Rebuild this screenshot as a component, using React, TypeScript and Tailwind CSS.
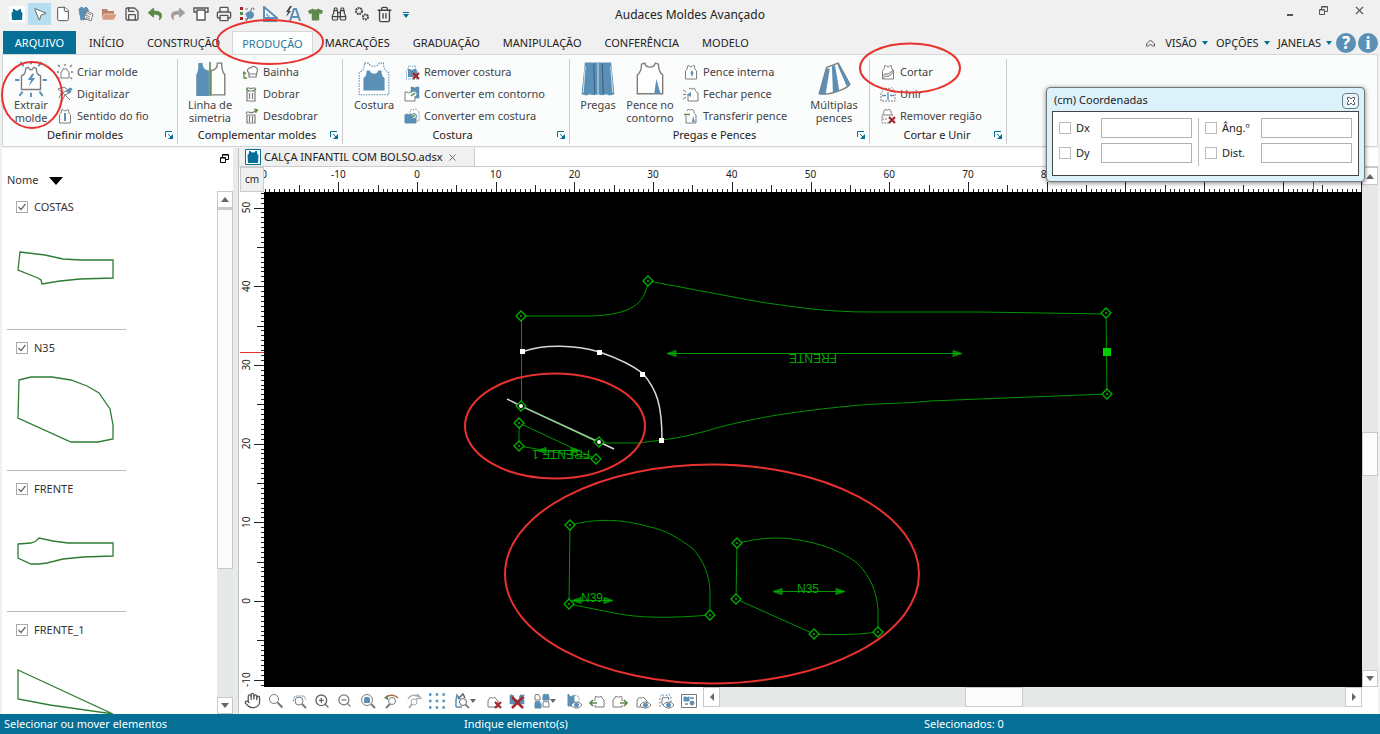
import type { ReactNode } from "react";
import {
  Binoculars,
  File,
  Hand,
  MousePointer2,
  Printer,
  Save,
  Trash2,
  X,
  ZoomIn,
  ZoomOut,
} from "lucide-react";
import { FaReply, FaShare, FaTshirt } from "react-icons/fa";

const BLUE = "#5b8fb5";
const TEAL = "#056f96";
const GRAY = "#7c7c7c";
const RED = "#a3282c";
const OLIVE = "#5d8a4a";

const VEST = "M8 3l3-1c1 5 9 5 10 0l3 1c0 5 1 8 4 10v18H4V13c3-2 4-5 4-10z";
const VEST_S = "M4.5 2L6 1.5c.5 1.8 3.5 1.8 4 0l1.5.5c0 2.4.5 3.8 2 4.8V15h-11V6.8c1.5-1 2-2.4 2-4.8z";

function S({ children, size = 16 }: { children: ReactNode; size?: number }) {
  return (
    <svg width={size} height={size} viewBox="0 0 16 16" fill="none" stroke={GRAY} className="shrink-0" aria-hidden>
      {children}
    </svg>
  );
}

function L({ children }: { children: ReactNode }) {
  return (
    <svg width={34} height={37} viewBox="0 0 32 35" fill="none" stroke={GRAY} className="shrink-0" aria-hidden>
      {children}
    </svg>
  );
}

function Caret({ className = "text-[#056f96]" }: { className?: string }) {
  return (
    <svg width="6" height="4" viewBox="0 0 6 4" className={`shrink-0 ${className}`} aria-hidden>
      <path d="M0 0h6L3 4z" fill="currentColor" />
    </svg>
  );
}

const redX = <path d="M9 9l6 6M15 9l-6 6" stroke={RED} strokeWidth="2.2" />;

const smallIcons = {
  criar: (
    <S>
      <path d="M6 5l1-.5c.5 1 1.5 1 2 0l1 .5c0 1.5.5 2.5 2 3v6H4V8c1.5-.5 2-1.5 2-3z" fill="#fff" />
      <path d="M1 1l2 2M15 1l-2 2M8 0v2M0 8h2M14 8h2M1 15l1.5-1.5M15 15l-1.5-1.5" strokeWidth="1.3" />
    </S>
  ),
  digitalizar: (
    <S>
      <path d="M1 3l6-2 7 5-6 3zM8 9l-3 6M8 9l5 5M3 8l8-4M2 12l4-8" />
      <path d="M9 5l4-3 2 1-3 4z" fill={BLUE} stroke={BLUE} />
    </S>
  ),
  fio: (
    <S>
      <path d={VEST_S} fill="#fff" />
      <path d="M8 5v8" stroke={BLUE} strokeWidth="2" />
    </S>
  ),
  bainha: (
    <S>
      <path d="M6 13V9C3 7 5 3 8 4c2-3 8-1 6 4l-1 5z" fill="#fff" strokeWidth="1.2" />
      <path d="M6 10h7" />
      <path d="M4 14H1V8M0 10l1-2 2 2" stroke={OLIVE} strokeWidth="1.3" />
    </S>
  ),
  dobrar: (
    <S>
      <path d="M4 4V2h2.5c.5 1 2.5 1 3 0H12v2M4 5h8v10H4zM6.5 7v6M9.5 7v6" fill="#fff" strokeWidth="1.2" />
      <path d="M3 3l3 2M13 3l-3 2" stroke={OLIVE} strokeWidth="1.3" />
    </S>
  ),
  desdobrar: (
    <S>
      <path d="M3 6l1-2h2c.5 1 2 1 3 0M4 7h8v8H4zM6.5 8v6M9.5 8v6" fill="#fff" strokeWidth="1.2" />
      <path d="M9 5l5-3M11 1l3.5 1-2 3" stroke={OLIVE} strokeWidth="1.3" />
    </S>
  ),
  removerCostura: (
    <S>
      <path d={VEST_S} fill="#fff" stroke={BLUE} strokeDasharray="1 1" />
      <path d="M4 5h2l2 1 2-1h2l1 3v5H4z" fill={BLUE} stroke="none" />
      {redX}
    </S>
  ),
  contorno: (
    <S>
      <path d="M7 1h2l1.5 1L12 1h3v11H7z" fill={BLUE} stroke={BLUE} strokeDasharray="1 1" />
      <path d="M1 6h2l1.5 1L6 6h2c0 2 1 3 3 3v6H1z" fill="#fff" />
      <circle cx="10" cy="8" r="2.5" fill="#eef5ee" stroke="none" />
      <path d="M7 10l4-3" stroke={OLIVE} strokeWidth="1.5" />
    </S>
  ),
  emCostura: (
    <S>
      <path d="M6 3l2-2 2 1 2-1 3 3v9H6z" fill="#fff" strokeDasharray="1 1" />
      <path d="M1 7l2-1 2 1 2-1 2 2 3 1v6H1z" fill={BLUE} stroke={BLUE} />
      <circle cx="10" cy="8" r="2.5" fill="#e6efe6" stroke={BLUE} />
      <path d="M8 9l3-2" stroke={OLIVE} strokeWidth="1.5" />
    </S>
  ),
  interna: (
    <S>
      <path d={VEST_S} fill="#fff" />
      <path d="M9 6l1.5 3L9 13 7.5 9z" fill={BLUE} stroke="none" />
    </S>
  ),
  fechar: (
    <S>
      <path d="M6 3l1.5-1c.5 1.5 2.5 1.5 3 0L12 3c0 2 1 3 3 4v8H5V8" fill="#fff" />
      <path d="M0 4l3 2M0 13l3-2M0 8.5h3" />
      <path d="M4 8.5l4-2.5v5z" fill={BLUE} stroke="none" />
    </S>
  ),
  transferir: (
    <S>
      <path d="M4 3l1.5-2c.5 1.5 3 1.5 3.5 0L11 3c0 2 .5 3 2 4v8H3V8" fill="#fff" />
      <path d="M1 6.5h6" stroke={OLIVE} strokeWidth="1.5" />
      <path d="M10 8l2 6H9z" fill={BLUE} stroke="none" />
    </S>
  ),
  cortar: (
    <S>
      <path d={VEST_S} fill="#fff" />
      <path d="M2.5 12c3-4 5-1 7-3l4-3v2l-4 4c-2 1-4-1-7 3z" fill="#ddd" />
    </S>
  ),
  unir: (
    <S>
      <path d="M3 3l1.5-1.5C5 3 7 3 8 2c1 1 3 1 3.5-.5L13 3c0 2 .5 3 2 4v8H1V7c1.5-1 2-2 2-4z" fill="#fff" strokeDasharray="2 1" />
      <path d="M2 9.5h4M14 9.5h-4M8 6v8" stroke={BLUE} strokeWidth="1.4" />
    </S>
  ),
  removerRegiao: (
    <S>
      <path d="M4 3l1.5-2c.5 1.5 3 1.5 3.5 0L11 3c0 2 .5 3 2 4H2c1.5-1 2-2 2-4z" fill="#fff" />
      <path d="M2 8v7h7M2 11h6" strokeDasharray="2 1" />
      {redX}
    </S>
  ),
};

const largeIcons = {
  extrair: (
    <L>
      <path d="M11 7l2.5-1c1 3 4 3 5 0L21 7c0 4 1 6 4 7v13H7V14c3-1 4-3 4-7z" fill="#fff" strokeWidth="1.3" />
      <path d="M17 12l-4 6h3l-2 6 6-8h-3l2-4z" fill={BLUE} stroke="none" />
      <path d="M16 0v3M6 1l3 4M26 1l-3 4M1 18h4M27 18h4M5 33l3-4M27 33l-3-4M16 30v4" stroke={BLUE} strokeWidth="1.8" />
    </L>
  ),
  simetria: (
    <L>
      <path d="M5 2h4c0 4 2 7 6 7v24H3V13c2-3 2-7 2-11z" fill={BLUE} stroke="none" />
      <path d="M27 2h-4c0 4-2 7-6 7v23h13V13c-3-3-3-7-3-11z" fill="#fff" strokeWidth="1.3" />
      <path d="M16 1v32" stroke={OLIVE} strokeWidth="1.5" />
    </L>
  ),
  costura: (
    <L>
      <path d="M7 2h4c1 4 9 4 10 0h4c0 4 1 7 5 9v21H2V11c4-2 5-5 5-9z" fill="#fff" stroke={BLUE} strokeDasharray="1.5 1" />
      <path d="M9 9h3c1 4 7 4 8 0h3c0 4 1 6 3 7v12H6V16c2-1 3-3 3-7z" fill={BLUE} stroke="none" />
    </L>
  ),
  pregas: (
    <L>
      <path d="M4 2h24l3 29-4 1-3-1-4 1-4-1-4 1-4-1-3 1-4-1z" fill={BLUE} stroke={BLUE} />
      <path d="M4 5L2 30M16 2v29M28 5l2 25" stroke="#c9deeb" />
      <path d="M12 3l1 28M20 3l1 28" stroke="#355f7d" />
    </L>
  ),
  pence: (
    <L>
      <path d={VEST} fill="#fff" strokeWidth="1.3" />
      <path d="M22 17l4 14h-6z" fill={BLUE} stroke="none" />
    </L>
  ),
  multiplas: (
    <L>
      <path d="M9 6l11-4 11 20c-3 4-7 5-10 6-7 3-13 4-19 3z" fill="#fff" strokeWidth="1.3" />
      <path d="M9 7L2 31l6 1 4-25zM14 5l1 25 6-2L17 4zM19 3l9 21 3-2L21 4z" fill={BLUE} stroke="none" />
    </L>
  ),
};

type SmallItem = { label: string; icon: keyof typeof smallIcons };

function SmallColumn({ items }: { items: SmallItem[] }) {
  return (
    <div className="flex flex-col">
      {items.map((item) => (
        <button key={item.label} className="flex h-[22px] items-center gap-1 whitespace-nowrap text-left">
          {smallIcons[item.icon]}
          {item.label}
        </button>
      ))}
    </div>
  );
}

function LargeButton({ label, icon }: { label: string; icon: keyof typeof largeIcons }) {
  return (
    <button className="flex w-[52px] shrink-0 flex-col items-center leading-[13px]">
      {largeIcons[icon]}
      <span className="whitespace-pre-line text-center">{label}</span>
    </button>
  );
}

function Group({ title, className, children }: { title: string; className: string; children: ReactNode }) {
  return (
    <section className={`flex shrink-0 flex-col border-r border-[#c9cccd] ${className}`}>
      <div className="flex h-[66px] items-start">{children}</div>
      <div className="flex h-4 items-center pr-1">
        <h2 className="flex-1 text-center text-[#222]">{title}</h2>
        <button aria-label={`Opções de ${title}`}>
          <svg width="8" height="8" viewBox="0 0 8 8" fill="none" stroke={TEAL} aria-hidden>
            <path d="M.5 6V.5H7M3 3l3 3" />
            <path d="M8 3v5H3z" fill={TEAL} stroke="none" />
          </svg>
        </button>
      </div>
    </section>
  );
}

const quickAccess: { label: string; icon: ReactNode; active?: boolean }[] = [
  {
    label: "Audaces",
    icon: (
      <S>
        <rect width="16" height="16" fill="#fff" stroke="none" />
        <path d="M4 3h1.5c1 2 4 2 5 0H12c0 2 0 3 1.5 4L13 14H3L2.5 7C4 6 4 5 4 3z" fill={TEAL} stroke="none" />
      </S>
    ),
  },
  { label: "Selecionar", icon: <MousePointer2 size={16} strokeWidth={1.5} fill="#fff" color="#666" />, active: true },
  { label: "Novo", icon: <File size={16} strokeWidth={1.5} fill="#fff" color="#555" /> },
  {
    label: "Novo molde",
    icon: (
      <S>
        <path d="M1 3l3-2c1 2 2 2 4 0l2 2 1 10-8 1z" fill={BLUE} stroke={BLUE} />
        <path d="M9 5l6 3-2 7-7-3z" fill="#fff" />
        <path d="M9 7l4 2M8 9l4 2M8 11l4 2" />
      </S>
    ),
  },
  {
    label: "Abrir",
    icon: (
      <S>
        <path d="M1 3h5l1 2h6v8H1z" fill="#b9806a" stroke="none" />
        <path d="M3 8h13l-3 6H1z" fill="#d79a7c" stroke="#fff" strokeWidth=".5" />
      </S>
    ),
  },
  { label: "Salvar", icon: <Save size={16} strokeWidth={2} color="#555" /> },
  { label: "Desfazer", icon: <FaReply size={14} color={OLIVE} /> },
  { label: "Refazer", icon: <FaShare size={14} color="#a0a0a0" /> },
  {
    label: "Plotar",
    icon: (
      <S>
        <path d="M1 2h14v4H1z" fill="#fff" stroke="#555" strokeWidth="1.4" />
        <path d="M4 4h8v10H4z" fill="#fff" stroke="#555" strokeWidth="1.4" />
      </S>
    ),
  },
  { label: "Imprimir", icon: <Printer size={16} strokeWidth={2} color="#555" /> },
  {
    label: "Propriedades",
    icon: (
      <S>
        <path d="M1 1h3v3H1zM1 11h3v3H1z" fill={RED} stroke="none" />
        <path d="M1 6h3v3H1z" fill={OLIVE} stroke="none" />
        <path d="M6 3h3M6 8h3M6 13h3" />
        <circle cx="11" cy="9" r="3.5" fill={BLUE} stroke={BLUE} />
        <path d="M12 5c0-4 3-4 3-1M9 12l-2 3" stroke="#555" />
      </S>
    ),
  },
  {
    label: "Medidas",
    icon: (
      <S>
        <path d="M2 1l13 11H2z" fill="#fff" stroke={BLUE} strokeWidth="2" />
        <path d="M5 7v3h3" stroke={BLUE} />
        <path d="M1 15h14" stroke={BLUE} strokeWidth="2" />
      </S>
    ),
  },
  {
    label: "Texto automático",
    icon: (
      <S>
        <path d="M5 15l4-12h2l4 12M6.5 11h7" stroke={BLUE} strokeWidth="2" />
        <path d="M5 0L1 6h2l-2 5 5-6H4l3-5z" fill="#444" stroke="none" />
      </S>
    ),
  },
  { label: "Peça", icon: <FaTshirt size={15} color={OLIVE} /> },
  { label: "Localizar", icon: <Binoculars size={16} strokeWidth={1.8} color="#444" /> },
  {
    label: "Configurações",
    icon: (
      <S>
        <circle cx="5" cy="5" r="3" stroke="#444" strokeWidth="2" strokeDasharray="1.8 .7" />
        <circle cx="11.5" cy="11" r="2.5" stroke="#444" strokeWidth="2" strokeDasharray="1.8 .7" />
      </S>
    ),
  },
  { label: "Excluir", icon: <Trash2 size={17} strokeWidth={1.9} color="#444" /> },
];

const tabs = ["INÍCIO", "CONSTRUÇÃO", "PRODUÇÃO", "MARCAÇÕES", "GRADUAÇÃO", "MANIPULAÇÃO", "CONFERÊNCIA", "MODELO"];

function TitleBar() {
  return (
    <header className="flex h-[30px] items-center">
      <div className="flex w-[396px] items-center pb-[2px] pl-[5px]">
        {quickAccess.map((q) => (
          <button
            key={q.label}
            aria-label={q.label}
            className={`flex h-[22px] flex-1 items-center justify-center ${q.active ? "bg-[#b5dff0]" : ""}`}
          >
            {q.icon}
          </button>
        ))}
      </div>
      <button aria-label="Personalizar" className="flex w-5 flex-col items-center gap-px text-[#056f96]">
        <span className="h-px w-[6px] bg-[#056f96]" />
        <Caret />
      </button>
      <h1 className="flex-1 pr-[320px] text-center text-[12px] text-[#222]">Audaces Moldes Avançado</h1>
      <div className="flex h-full w-[96px] items-start justify-between pr-[14px] pt-1 text-[#555]">
        <button aria-label="Minimizar" className="flex h-3 w-3 items-end justify-center">
          <span className="h-[2px] w-[6px] bg-[#555]" />
        </button>
        <button aria-label="Restaurar" className="flex h-3 w-3 items-center">
          <RestoreIcon />
        </button>
        <button aria-label="Fechar">
          <X size={13} strokeWidth={2} />
        </button>
      </div>
    </header>
  );
}

function RestoreIcon() {
  return (
    <svg width="9" height="9" viewBox="0 0 9 9" fill="none" stroke="currentColor" aria-hidden>
      <path d="M2.5 3V.5h6v5H6M3 1h5" />
      <path d="M.5 3.5h5v5h-5zM1 4h4" />
    </svg>
  );
}

function TabBar() {
  return (
    <nav className="flex h-6 items-end text-[11px] text-[#222]">
      <button className="ml-[3px] h-[23px] w-[73px] bg-[#056f96] pt-[2px] text-white">ARQUIVO</button>
      <div className="ml-[2px] flex gap-px">
        {tabs.map((tab) => (
          <button
            key={tab}
            className={
              tab === "PRODUÇÃO"
                ? "h-[23px] border border-b-0 border-[#d5d8d9] bg-[#fcfdfd] px-[9px] pt-[2px] text-[#2f7596]"
                : "h-[23px] px-[11px] pt-[2px]"
            }
          >
            {tab}
          </button>
        ))}
      </div>
      <div className="ml-auto flex h-[23px] items-center pr-[2px]">
        <button aria-label="Recolher faixa" className="mr-[10px]">
          <svg width="9" height="8" viewBox="0 0 9 8" fill="none" stroke="#555" aria-hidden>
            <path d="M.5 5l4-4 4 4v2h-2l-2-2-2 2h-2z" />
          </svg>
        </button>
        <div className="mr-1 flex gap-2">
          {["VISÃO", "OPÇÕES", "JANELAS"].map((menu) => (
            <button key={menu} className="flex items-center gap-[5px] pt-px">
              {menu}
              <Caret />
            </button>
          ))}
        </div>
        <div className="flex gap-[2px]">
          <button
            aria-label="Ajuda"
            className="h-[20px] w-[20px] rounded-full bg-[#5b8fb5] text-[17px] font-bold leading-[20px] text-white"
          >
            ?
          </button>
          <button
            aria-label="Informações"
            className="h-[20px] w-[20px] rounded-full bg-[#5b8fb5] font-['Liberation_Serif',serif] text-[18px] font-bold leading-[20px] text-white"
          >
            i
          </button>
        </div>
      </div>
    </nav>
  );
}

function Ribbon() {
  return (
    <div className="mx-[2px] flex h-[93px] shrink-0 overflow-hidden border border-[#d3d7d8] bg-[#fbfcfc] pb-[2px] pt-1 text-[11px] text-[#444]">
      <Group title="Definir moldes" className="w-[175px] pl-[2px] pt-[2px]">
        <LargeButton label={"Extrair\nmolde"} icon="extrair" />
        <SmallColumn
          items={[
            { label: "Criar molde", icon: "criar" },
            { label: "Digitalizar", icon: "digitalizar" },
            { label: "Sentido do fio", icon: "fio" },
          ]}
        />
      </Group>
      <Group title="Complementar moldes" className="w-[165px] pl-[6px] pt-[2px]">
        <LargeButton label={"Linha de\nsimetria"} icon="simetria" />
        <div className="ml-[7px]">
          <SmallColumn
            items={[
              { label: "Bainha", icon: "bainha" },
              { label: "Dobrar", icon: "dobrar" },
              { label: "Desdobrar", icon: "desdobrar" },
            ]}
          />
        </div>
      </Group>
      <Group title="Costura" className="w-[227px] pl-[5px] pt-[2px]">
        <LargeButton label="Costura" icon="costura" />
        <div className="ml-1">
          <SmallColumn
            items={[
              { label: "Remover costura", icon: "removerCostura" },
              { label: "Converter em contorno", icon: "contorno" },
              { label: "Converter em costura", icon: "emCostura" },
            ]}
          />
        </div>
      </Group>
      <Group title="Pregas e Pences" className="w-[300px] pl-[2px] pt-[2px]">
        <LargeButton label="Pregas" icon="pregas" />
        <LargeButton label={"Pence no\ncontorno"} icon="pence" />
        <div className="ml-[7px] w-[125px]">
          <SmallColumn
            items={[
              { label: "Pence interna", icon: "interna" },
              { label: "Fechar pence", icon: "fechar" },
              { label: "Transferir pence", icon: "transferir" },
            ]}
          />
        </div>
        <LargeButton label={"Múltiplas\npences"} icon="multiplas" />
      </Group>
      <Group title="Cortar e Unir" className="w-[137px] pl-[10px] pt-[2px]">
        <SmallColumn
          items={[
            { label: "Cortar", icon: "cortar" },
            { label: "Unir", icon: "unir" },
            { label: "Remover região", icon: "removerRegiao" },
          ]}
        />
      </Group>
    </div>
  );
}

const pieces = [
  { name: "COSTAS", points: "13,27 38,30 56,34 74,35 106,35 106,53 73,54 53,56 35,59 34,55 31,53 11,45" },
  { name: "N35", points: "12,14 24,11 45,11 64,14 80,20 92,27 103,43 106,59 106,73 91,76 64,76 11,52" },
  {
    name: "FRENTE",
    points: "11,37 24,36 29,34 32,31 46,34 61,36 106,36 106,49 76,50 56,52 40,56 32,57 24,57 11,51",
  },
  { name: "FRENTE_1", points: "11,22 106,66 43,57 11,51" },
];

function ArrowButton({ dir, className }: { dir: "up" | "down" | "left" | "right"; className: string }) {
  const d = { up: "M0 7h8L4 2z", down: "M0 2h8L4 7z", left: "M6 0v8L2 4z", right: "M2 0v8l4-4z" }[dir];
  return (
    <button
      aria-label={`Rolar ${dir}`}
      className={`flex shrink-0 items-center justify-center border border-[#c8caca] bg-white ${className}`}
    >
      <svg width="8" height="9" viewBox="0 0 8 9" aria-hidden>
        <path d={d} fill="#666" />
      </svg>
    </button>
  );
}

function PiecePanel() {
  return (
    <aside className="ml-[2px] flex w-[231px] shrink-0 flex-col bg-white">
      <div className="flex h-6 items-center justify-end pb-1 pr-1 text-black">
        <button aria-label="Desencaixar painel">
          <RestoreIcon />
        </button>
      </div>
      <div className="flex h-[17px] items-center gap-[10px] pl-[5px] text-[11px] text-[#333]">
        Nome
        <svg width="14" height="8" viewBox="0 0 14 8" aria-hidden>
          <path d="M0 0h14L7 8z" />
        </svg>
      </div>
      <div className="flex min-h-0 flex-1">
        <ul className="min-w-0 flex-1 overflow-hidden">
          {pieces.map((p) => (
            <li key={p.name} className="ml-[5px] h-[141px] w-[119px] border-b border-[#b4bcc0]">
              <label className="flex h-9 items-center gap-[6px] pl-[9px] text-[11px] text-[#333]">
                <input
                  type="checkbox"
                  defaultChecked
                  className="peer m-0 h-3 w-3 shrink-0 appearance-none border border-[#aaa] bg-white"
                />
                <svg
                  width="8"
                  height="8"
                  viewBox="0 0 8 8"
                  fill="none"
                  stroke="#666"
                  className="-ml-4 mr-[2px] hidden peer-checked:block"
                  aria-hidden
                >
                  <path d="M.5 4L3 6.5 7.5 1" strokeWidth="1.2" />
                </svg>
                {p.name}
              </label>
              <svg width="119" height="104" fill="none" stroke="#2e7d32" strokeWidth="1.3" aria-label={p.name}>
                <polygon points={p.points} />
              </svg>
            </li>
          ))}
        </ul>
        <div className="mt-[2px] flex w-4 flex-col bg-[#e6e8e8]">
          <ArrowButton dir="up" className="h-[17px] w-4" />
          <div className="h-[69%] border border-t-2 border-[#c8caca] bg-[#fbfbfb]" />
          <div className="flex-1" />
          <ArrowButton dir="down" className="h-[17px] w-4" />
        </div>
      </div>
    </aside>
  );
}

// 10 cm on screen
const STEP = 78.7;
const SUB = 16;

function tickLength(i: number) {
  if (i % SUB === 0) return 10;
  return i % (SUB / 2) === 0 ? 7 : 3;
}

function TopRuler() {
  const origin = 153;
  const ticks = Array.from({ length: 16 * SUB }, (_, i) => i - 2 * SUB);
  return (
    <svg className="h-[25px] min-w-0 flex-1 bg-white text-[10px]" aria-label="Régua horizontal">
      {ticks.map((i) => (
        <path key={i} d={`M${Math.round(origin + (i * STEP) / SUB) + 0.5} 25v${-tickLength(i)}`} stroke="#222" />
      ))}
      {Array.from({ length: 14 }, (_, n) => n - 2).map((n) => (
        <text key={n} x={origin + n * STEP} y="11" textAnchor="middle" fill="#222">
          {n * 10}
        </text>
      ))}
      <path d="M1049.5 13v12" stroke="#e8322f" />
    </svg>
  );
}

function SideRuler() {
  const origin = 409;
  const ticks = Array.from({ length: 14 * SUB }, (_, i) => i - 6 * SUB);
  return (
    <svg className="h-full w-6 shrink-0 bg-white text-[10px]" aria-label="Régua vertical">
      {ticks.map((i) => (
        <path key={i} d={`M24 ${Math.round(origin + (i * STEP) / SUB) + 0.5}h${-tickLength(i)}`} stroke="#222" />
      ))}
      {Array.from({ length: 7 }, (_, n) => n - 5).map((n) => (
        <text key={n} transform={`translate(10 ${origin + n * STEP}) rotate(-90)`} textAnchor="middle" fill="#222">
          {n * -10}
        </text>
      ))}
      <path d="M0 160.5h24" stroke="#e8322f" />
    </svg>
  );
}

const nodes: { x: number; y: number; picked?: boolean }[] = [
  { x: 257, y: 124 },
  { x: 384, y: 89 },
  { x: 842, y: 121 },
  { x: 843, y: 202 },
  { x: 257, y: 214, picked: true },
  { x: 335, y: 250, picked: true },
  { x: 255, y: 231 },
  { x: 255, y: 254 },
  { x: 332, y: 267 },
  { x: 306, y: 333 },
  { x: 305, y: 412 },
  { x: 446, y: 423 },
  { x: 473, y: 351 },
  { x: 472, y: 407 },
  { x: 550, y: 442 },
  { x: 614, y: 440 },
];

const curvePoints = [
  [259, 159],
  [336, 160],
  [379, 182],
  [398, 248],
];

function GrainArrow({ x1, x2, y }: { x1: number; x2: number; y: number }) {
  return (
    <g fill="#00b400">
      <path d={`M${x1} ${y}H${x2}`} stroke="#009a00" />
      <path d={`M${x1} ${y}l9-3v6zM${x2} ${y}l-9-3v6z`} fillOpacity=".7" />
    </g>
  );
}

function Canvas() {
  return (
    <svg
      className="h-full min-w-0 flex-1 bg-black font-['Liberation_Sans',sans-serif]"
      fill="none"
      stroke="#009400"
      aria-label="Área de desenho"
    >
      <path d="M257.5 124H329C366 122 381 113 384 89L496 110C536 116 566 120 606 120H716L842 122L843 202L666 209C636 212 616 211 586 214C526 220 496 225 456 235C436 241 421 245 398 248L374 251H335L257.5 214z" />
      <path d="M255 231v23l77 13z" />
      <path d="M306 333C333 326 358 327 386 335C401 338 413 345 428 356C440 368 446 386 446 400V423C410 426 375 427 345 420L305 412z" />
      <path d="M473 351C485 349 497 346 511 346C530 346 548 350 563 355C576 360 586 365 594 372C606 384 613 400 614 418V440C590 443 575 443 550 442L472 407z" />
      <GrainArrow x1={403} x2={698} y={161.5} />
      <GrainArrow x1={273} x2={316} y={258.5} />
      <GrainArrow x1={308} x2={349} y={408.5} />
      <GrainArrow x1={509} x2={581} y={399.5} />
      <g fill="#00a800" stroke="none" fontSize="12">
        <text transform="translate(573 162) rotate(180)">FRENTE</text>
        <text transform="translate(326 258) rotate(180)">FRENTE 1</text>
        <text x="317" y="410">
          N39
        </text>
        <text x="533" y="401">
          N35
        </text>
      </g>
      <g stroke="#d8d8d8" strokeWidth="1.5">
        <path d="M259 159.5C281 152 311 153 335.5 160C353 166 368 173 379 181.5C393 198 398 213 398 248" />
        <path d="M243 207l14 7M335 250l15 7" />
        <path d="M257 214l78 36" stroke="#9ccc9c" />
      </g>
      <g fill="#fff" stroke="none">
        {curvePoints.map(([x, y]) => (
          <rect key={x} x={x - 3} y={y - 2} width="5" height="5" />
        ))}
      </g>
      {nodes.map(({ x, y, picked }) => (
        <g key={`${x}-${y}`}>
          <path d={`M${x} ${y - 5}l5 5l-5 5l-5-5z`} fill="#000" stroke="#00b400" strokeWidth="1.3" />
          <circle cx={x} cy={y} r={picked ? 2 : 1} fill={picked ? "#fff" : "#00b400"} stroke="none" />
        </g>
      ))}
      <path d="M839 156h8v8h-8z" fill="#0c0" stroke="none" />
    </svg>
  );
}

const miniVest = "M3 6l1.5-2c.5 1.5 3.5 1.5 4 0L10 6l2 2v6H2V8z";
const eye = (
  <>
    <path d="M5 12c3-4 8-4 11 0-3 4-8 4-11 0z" fill="#fff" stroke="#777" />
    <circle cx="10.5" cy="12" r="2" fill={BLUE} stroke={BLUE} />
  </>
);

const viewTools: { label: string; icon: ReactNode; menu?: boolean }[] = [
  { label: "Mover vista", icon: <Hand size={17} strokeWidth={1.8} color="#555" /> },
  {
    label: "Zoom",
    icon: (
      <S>
        <circle cx="6" cy="6" r="4.5" fill="#fff" />
        <path d="M9.5 9.5l5 5" strokeWidth="2.2" />
      </S>
    ),
  },
  {
    label: "Zoom janela",
    icon: (
      <S>
        <path d="M2 8l2-5h9l2 4" strokeDasharray="2 1" stroke={BLUE} />
        <circle cx="8" cy="8" r="4" fill="#fff" />
        <path d="M11 11l4 4" strokeWidth="2" />
      </S>
    ),
  },
  { label: "Ampliar", icon: <ZoomIn size={16} strokeWidth={2} color="#666" /> },
  { label: "Reduzir", icon: <ZoomOut size={15} strokeWidth={2} color="#777" /> },
  {
    label: "Zoom molde",
    icon: (
      <S>
        <circle cx="7" cy="7" r="5.5" fill="#fff" />
        <path d="M4 6l1-2h4l1 2v4H4z" fill={BLUE} stroke="none" />
        <path d="M11 11l4 4" strokeWidth="2.2" />
      </S>
    ),
  },
  {
    label: "Zoom anterior",
    icon: (
      <S>
        <path d="M3 4c4-3 9-2 12 1" stroke="#a8704a" strokeWidth="1.5" />
        <path d="M1 5l4-3v5z" fill={OLIVE} stroke="none" />
        <circle cx="9" cy="8" r="3.5" />
        <path d="M7 11l-4 4" strokeWidth="2" />
      </S>
    ),
  },
  {
    label: "Zoom seguinte",
    icon: (
      <S>
        <path d="M2 6c2-4 7-5 11-2M11 1l4 4-5 1" stroke="#aaa" strokeWidth="1.5" />
        <circle cx="8" cy="9" r="3" stroke="#aaa" />
        <path d="M6 11l-3 4" stroke="#aaa" strokeWidth="2" />
      </S>
    ),
  },
  {
    label: "Grade",
    icon: (
      <S>
        <path d="M0 1.5h16M0 8h16M0 14.5h16" stroke={BLUE} strokeWidth="2.5" strokeDasharray="2.5 4.2" />
      </S>
    ),
  },
  {
    label: "Visualizar molde",
    menu: true,
    icon: (
      <S>
        <path d="M2 14V7l1-5 3 4M2 14h6" stroke={BLUE} strokeWidth="1.5" />
        <circle cx="9" cy="9" r="3.5" fill="#fff" stroke="#666" />
        <path d="M11.5 11.5L15 15M4 6l5-5 2 4" stroke="#666" strokeWidth="1.5" />
      </S>
    ),
  },
  {
    label: "Ocultar molde",
    icon: (
      <S>
        <path d={miniVest} fill="#fff" />
        {redX}
      </S>
    ),
  },
  {
    label: "Ocultar todos",
    icon: (
      <S>
        <path d="M1 2h3l1 5h5l1-5h4v9H1z" fill={BLUE} stroke={BLUE} strokeDasharray="2 1" />
        <path d="M3 4l11 11M14 4L3 15" stroke={RED} strokeWidth="2.5" />
      </S>
    ),
  },
  {
    label: "Organizar",
    menu: true,
    icon: (
      <S>
        <path d="M1 3l1-2 1 1 1-1 2 3v3H1zM9 10l1-2 2 1 2-1 1 3v3H9z" fill="#fff" />
        <path d="M9 3l1-2 2 1 2-1 1 3v3H9zM1 10l1-2 1 1 2-1 2 3v4H1z" fill={BLUE} stroke={BLUE} />
      </S>
    ),
  },
  {
    label: "Exibir preenchido",
    icon: (
      <S>
        <path d="M2 1l3 3 3-2v11H2z" fill={BLUE} stroke={BLUE} />
        <path d="M9 2l4 2v5" strokeDasharray="1 1" />
        {eye}
      </S>
    ),
  },
  {
    label: "Molde anterior",
    icon: (
      <S>
        <path d="M6 8V5l1-2c.5 1.5 4 1.5 5 0l1 2 2 2v7H6v-2" />
        <path d="M8 10H2M4 7l-3 3 3 3" stroke={OLIVE} strokeWidth="1.7" />
      </S>
    ),
  },
  {
    label: "Próximo molde",
    icon: (
      <S>
        <path d="M10 8V5L9 3c-.5 1.5-4 1.5-5 0L3 5 1 7v7h9v-2" />
        <path d="M8 10h6M12 7l3 3-3 3" stroke={OLIVE} strokeWidth="1.7" />
      </S>
    ),
  },
  {
    label: "Exibir molde",
    icon: (
      <S>
        <path d={miniVest} fill="#fff" />
        {eye}
      </S>
    ),
  },
  {
    label: "Exibir costura",
    icon: (
      <S>
        <path d="M2 14V5l2-4c1 2 5 2 7 0l2 4v4" stroke={BLUE} strokeDasharray="2 1.5" />
        <path d="M4 12V7l1-3c1 1 4 1 5 0l1 3" />
        {eye}
      </S>
    ),
  },
  {
    label: "Miniaturas",
    icon: (
      <S>
        <path d="M.5 1.5h15v13H.5z" fill="#fff" stroke="#777" />
        <path d="M3 4h2l1 1 1-1h1v4H3z" fill={BLUE} stroke={BLUE} />
        <circle cx="11" cy="10" r="2" fill={BLUE} stroke={BLUE} />
        <path d="M9 5h3v1M4 11h3" stroke={BLUE} strokeWidth="1.5" />
      </S>
    ),
  },
];

function Workspace() {
  return (
    <main className="mr-[2px] flex min-w-0 flex-1 flex-col border-l border-[#bfc3c4] bg-white">
      <div className="flex h-[19px] shrink-0 items-end border-b border-[#c9cccd]">
        <div className="flex h-[18px] w-[236px] items-center gap-[3px] border-r border-[#c9cccd] bg-[#f0f0f0] pl-[6px] text-[11px] text-[#222]">
          <svg width="16" height="16" viewBox="0 0 16 16" className="shrink-0" aria-hidden>
            <path d="M.5.5h15v15H.5z" fill="#fff" stroke={TEAL} />
            <path d="M4 2h1.5c1 2 4 2 5 0H12c0 2 0 3 1.5 4L13 14H3L2.5 6C4 5 4 4 4 2z" fill={TEAL} />
          </svg>
          <span className="whitespace-nowrap">CALÇA INFANTIL COM BOLSO.adsx</span>
          <button aria-label="Fechar documento" className="ml-auto mr-4">
            <X size={11} strokeWidth={2} color="#666" />
          </button>
        </div>
      </div>
      <div className="flex min-h-0 flex-1">
        <div className="flex min-w-0 flex-1 flex-col pl-px">
          <div className="flex h-[25px] shrink-0">
            <div className="flex w-6 items-center justify-center border border-[#ccc] bg-[#f0f0f0] text-[10px] text-[#222]">
              cm
            </div>
            <TopRuler />
          </div>
          <div className="flex min-h-0 flex-1">
            <SideRuler />
            <Canvas />
          </div>
        </div>
        <div className="flex w-4 shrink-0 flex-col bg-[#e6e8e8]">
          <ArrowButton dir="up" className="h-[18px] w-4" />
          <div className="flex-[247]" />
          <div className="h-11 border border-[#c8caca] bg-[#fbfbfb]" />
          <div className="flex-[194]" />
          <ArrowButton dir="down" className="h-[17px] w-4" />
        </div>
      </div>
      <div className="flex h-[27px] shrink-0 pr-4">
        <div className="flex w-[464px] shrink-0 items-center pl-[2px]">
          {viewTools.map((t) => (
            <button
              key={t.label}
              aria-label={t.label}
              className={`flex h-6 shrink-0 items-center justify-center ${t.menu ? "w-[34px]" : "w-[23px]"}`}
            >
              {t.icon}
              {t.menu && <Caret className="text-[#666]" />}
            </button>
          ))}
        </div>
        <div className="flex h-5 flex-1 bg-[#e6e8e8]">
          <ArrowButton dir="left" className="h-5 w-[17px]" />
          <div className="flex-[246]" />
          <div className="w-[58px] border border-[#c8caca] bg-[#fbfbfb]" />
          <div className="flex-[324]" />
          <ArrowButton dir="right" className="h-5 w-[17px]" />
        </div>
      </div>
    </main>
  );
}

function CoordField({ label }: { label: string }) {
  return (
    <div className="flex h-5 items-center">
      <label className="flex w-[42px] items-center gap-[5px]">
        <input type="checkbox" className="m-0 h-3 w-3 shrink-0 appearance-none border border-[#bbb] bg-white" />
        {label}
      </label>
      <input type="text" aria-label={label} className="ml-auto h-5 w-[91px] border border-[#b0b0b0] bg-white px-1" />
    </div>
  );
}

function CoordinatesWindow() {
  return (
    <div
      role="dialog"
      aria-label="Coordenadas"
      className="absolute right-[15px] top-[87px] w-[319px] rounded-sm border border-[#6f7a80] bg-[#dbf2fb] px-[5px] pb-[5px] text-[11px] text-[#222] shadow-[0_1px_5px_rgba(0,0,0,0.5)]"
    >
      <div className="flex h-[23px] items-center justify-between pl-[2px] pt-[2px]">
        <span>(cm) Coordenadas</span>
        <button
          aria-label="Fechar coordenadas"
          className="flex h-4 w-[17px] items-center justify-center rounded-sm border border-[#6f7a80] bg-[#e8f6fb]"
        >
          <svg width="8" height="8" viewBox="0 0 8 8" fill="#fff" stroke="#555" aria-hidden>
            <path d="M.5.5h2L4 2 5.5.5h2v2L6 4l1.5 1.5v2h-2L4 6 2.5 7.5h-2v-2L2 4 .5 2.5z" />
          </svg>
        </button>
      </div>
      <div className="flex h-[65px] border border-[#444] bg-white px-[6px] pt-[6px]">
        <div className="flex w-[133px] flex-col gap-[5px]">
          <CoordField label="Dx" />
          <CoordField label="Dy" />
        </div>
        <div className="mx-[6px] h-12 w-px bg-[#bbb]" />
        <div className="flex flex-1 flex-col gap-[5px]">
          <CoordField label="Âng.º" />
          <CoordField label="Dist." />
        </div>
      </div>
    </div>
  );
}

function Highlights() {
  return (
    <svg
      className="pointer-events-none absolute inset-0 h-full w-full"
      fill="none"
      stroke="#e8322f"
      strokeWidth="2"
      aria-hidden
    >
      <ellipse cx="32" cy="95" rx="30" ry="33" />
      <ellipse cx="270" cy="42" rx="53" ry="22" />
      <ellipse cx="910" cy="68" rx="50" ry="24.5" />
      <ellipse cx="555" cy="426" rx="90" ry="52.5" />
      <ellipse cx="712" cy="574" rx="207" ry="109.5" />
    </svg>
  );
}

export default function App() {
  return (
    <div className="relative flex h-screen flex-col overflow-hidden bg-[#f0f0f0] font-['Noto_Sans','Open_Sans',sans-serif]">
      <TitleBar />
      <TabBar />
      <Ribbon />
      <div className="flex min-h-0 flex-1 pt-px">
        <PiecePanel />
        <div className="w-[5px] shrink-0 bg-[#e9ebeb]" />
        <Workspace />
      </div>
      <footer className="grid h-5 shrink-0 grid-cols-3 items-center gap-x-1 bg-[#056f96] pl-1 text-[11px] text-white">
        <span>Selecionar ou mover elementos</span>
        <span>Indique elemento(s)</span>
        <span>Selecionados: 0</span>
      </footer>
      <Highlights />
      <CoordinatesWindow />
    </div>
  );
}
